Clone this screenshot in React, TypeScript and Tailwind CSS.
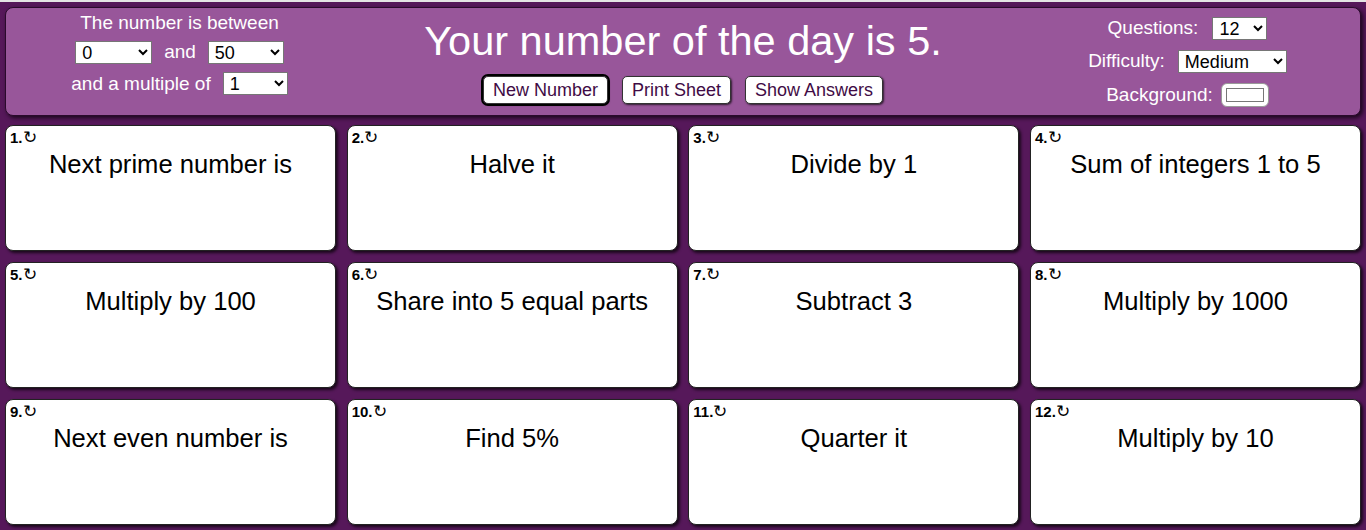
import React from "react";

const questions = [
  "Next prime number is",
  "Halve it",
  "Divide by 1",
  "Sum of integers 1 to 5",
  "Multiply by 100",
  "Share into 5 equal parts",
  "Subtract 3",
  "Multiply by 1000",
  "Next even number is",
  "Find 5%",
  "Quarter it",
  "Multiply by 10",
];

function Select({ value, options, className }: { value: string; options: string[]; className: string }) {
  return (
    <select
      defaultValue={value}
      className={`h-[23px] bg-white text-black border border-[#767676] text-[18px] leading-none pl-[2px] ${className}`}
    >
      {options.map((o) => (
        <option key={o}>{o}</option>
      ))}
    </select>
  );
}

function HeaderButton({ label, focused }: { label: string; focused?: boolean }) {
  return (
    <button
      className={`h-[28px] px-[9px] bg-white text-[#3f0b45] text-[18px] rounded-[5px] border border-[#333] shadow-[1px_1px_2px_rgba(0,0,0,0.7)] ${
        focused ? "outline-2 outline-black outline-offset-0" : ""
      }`}
    >
      {label}
    </button>
  );
}

export default function App() {
  return (
    <div
      className="w-[1366px] h-[530px] overflow-hidden bg-[#56185a] border-t-2 border-[#e4e4e4]"
      style={{ fontFamily: '"Liberation Sans", Arial, sans-serif' }}
    >
      {/* Header panel */}
      <div className="mx-[5px] mt-[5px] h-[109px] rounded-[8px] bg-[#98569a] border border-[#2a0a2c] shadow-[2px_2px_4px_rgba(0,0,0,0.7)] flex text-white">
        <div className="w-[345px] flex flex-col items-center pl-[2px] pt-[4px]">
          <div className="text-[19px] leading-[22px]">The number is between</div>
          <div className="flex items-center mt-[4px] text-[19px]">
            <Select value="0" options={["0", "10", "20"]} className="w-[77px]" />
            <span className="mx-[12px]">and</span>
            <Select value="50" options={["50", "100"]} className="w-[76px]" />
          </div>
          <div className="flex items-center mt-[3px] text-[19px]">
            <span className="mr-[12px]">and a multiple of</span>
            <Select value="1" options={["1", "2", "5", "10"]} className="w-[65px]" />
          </div>
        </div>

        <div className="flex-1 flex flex-col items-center pt-[9px]">
          <div className="text-[41.5px] leading-[48px]">Your number of the day is 5.</div>
          <div className="flex gap-[14px] mt-[11px]">
            <HeaderButton label="New Number" focused />
            <HeaderButton label="Print Sheet" />
            <HeaderButton label="Show Answers" />
          </div>
        </div>

        <div className="w-[345px] flex flex-col items-center pt-[9px] text-[19px]">
          <div className="flex items-center h-[23px]">
            <span className="mr-[14px]">Questions:</span>
            <Select value="12" options={["6", "9", "12"]} className="w-[55px]" />
          </div>
          <div className="flex items-center h-[23px] mt-[10px]">
            <span className="mr-[13px]">Difficulty:</span>
            <Select value="Medium" options={["Easy", "Medium", "Hard"]} className="w-[109px]" />
          </div>
          <div className="flex items-center h-[24px] mt-[10px]">
            <span className="mr-[8px]">Background:</span>
            <div className="w-[48px] h-[24px] bg-white rounded-[6px] border border-[#999] flex items-center justify-center">
              <div className="w-[38px] h-[14px] border border-[#777] bg-white" />
            </div>
          </div>
        </div>
      </div>

      {/* Question cards */}
      <div className="grid grid-cols-4 gap-x-[10.67px] gap-y-[11px] px-[5px] mt-[9px]">
        {questions.map((q, i) => (
          <div
            key={i}
            className="h-[126px] bg-white rounded-[8px] border border-[#222] shadow-[2px_2px_3px_rgba(0,0,0,0.7)] text-black"
          >
            <div className="pl-[4px] pt-[3px] text-[15px] font-bold leading-[17px]">
              {i + 1}.<span className="font-normal text-[17px]">↻</span>
            </div>
            <div className="text-center text-[25.6px] leading-[30px] mt-[3px]">{q}</div>
          </div>
        ))}
      </div>
    </div>
  );
}
